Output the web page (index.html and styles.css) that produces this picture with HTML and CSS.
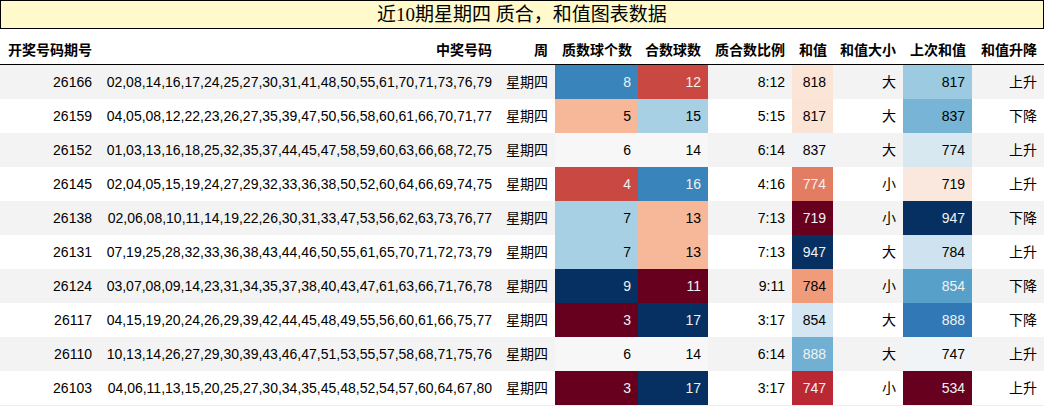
FILE: index.html
```html
<!DOCTYPE html>
<html lang="zh">
<head>
<meta charset="utf-8">
<title>近10期星期四 质合，和值图表数据</title>
<link rel="stylesheet" href="styles.css">
</head>
<body>
<div class="sheet">
  <div class="title">近10期星期四 质合，和值图表数据</div>
  <table class="data">
    <thead>
      <tr>
        <th class="c-id">开奖号码期号</th>
        <th class="c-nums">中奖号码</th>
        <th class="c-week">周</th>
        <th class="c-prime">质数球个数</th>
        <th class="c-comp">合数球数</th>
        <th class="c-ratio">质合数比例</th>
        <th class="c-sum">和值</th>
        <th class="c-size">和值大小</th>
        <th class="c-prev">上次和值</th>
        <th class="c-trend">和值升降</th>
      </tr>
    </thead>
    <tbody>
      <tr>
        <td>26166</td><td>02,08,14,16,17,24,25,27,30,31,41,48,50,55,61,70,71,73,76,79</td><td>星期四</td>
        <td style="background:#3884bb;color:#f1f1f1">8</td>
        <td style="background:#ca4842;color:#f1f1f1">12</td>
        <td>8:12</td>
        <td style="background:#fbe5d7;color:#000">818</td>
        <td>大</td>
        <td style="background:#9bcae1;color:#000">817</td>
        <td>上升</td>
      </tr>
      <tr>
        <td>26159</td><td>04,05,08,12,22,23,26,27,35,39,47,50,56,58,60,61,66,70,71,77</td><td>星期四</td>
        <td style="background:#f7b799;color:#000">5</td>
        <td style="background:#a7d0e4;color:#000">15</td>
        <td>5:15</td>
        <td style="background:#fbe3d5;color:#000">817</td>
        <td>大</td>
        <td style="background:#77b4d5;color:#000">837</td>
        <td>下降</td>
      </tr>
      <tr>
        <td>26152</td><td>01,03,13,16,18,25,32,35,37,44,45,47,58,59,60,63,66,68,72,75</td><td>星期四</td>
        <td style="background:#f7f7f7;color:#000">6</td>
        <td style="background:#f7f7f7;color:#000">14</td>
        <td>6:14</td>
        <td style="background:#f0f4f6;color:#000">837</td>
        <td>大</td>
        <td style="background:#d8e8f1;color:#000">774</td>
        <td>上升</td>
      </tr>
      <tr>
        <td>26145</td><td>02,04,05,15,19,24,27,29,32,33,36,38,50,52,60,64,66,69,74,75</td><td>星期四</td>
        <td style="background:#ca4842;color:#f1f1f1">4</td>
        <td style="background:#3884bb;color:#f1f1f1">16</td>
        <td>4:16</td>
        <td style="background:#e27c63;color:#f1f1f1">774</td>
        <td>小</td>
        <td style="background:#fae8de;color:#000">719</td>
        <td>上升</td>
      </tr>
      <tr>
        <td>26138</td><td>02,06,08,10,11,14,19,22,26,30,31,33,47,53,56,62,63,73,76,77</td><td>星期四</td>
        <td style="background:#a7d0e4;color:#000">7</td>
        <td style="background:#f7b799;color:#000">13</td>
        <td>7:13</td>
        <td style="background:#67001f;color:#f1f1f1">719</td>
        <td>小</td>
        <td style="background:#053061;color:#f1f1f1">947</td>
        <td>下降</td>
      </tr>
      <tr>
        <td>26131</td><td>07,19,25,28,32,33,36,38,43,44,46,50,55,61,65,70,71,72,73,79</td><td>星期四</td>
        <td style="background:#a7d0e4;color:#000">7</td>
        <td style="background:#f7b799;color:#000">13</td>
        <td>7:13</td>
        <td style="background:#053061;color:#f1f1f1">947</td>
        <td>大</td>
        <td style="background:#cee3ef;color:#000">784</td>
        <td>上升</td>
      </tr>
      <tr>
        <td>26124</td><td>03,07,08,09,14,23,31,34,35,37,38,40,43,47,61,63,66,71,76,78</td><td>星期四</td>
        <td style="background:#053061;color:#f1f1f1">9</td>
        <td style="background:#67001f;color:#f1f1f1">11</td>
        <td>9:11</td>
        <td style="background:#f09b7a;color:#000">784</td>
        <td>小</td>
        <td style="background:#57a0ca;color:#f1f1f1">854</td>
        <td>下降</td>
      </tr>
      <tr>
        <td>26117</td><td>04,15,19,20,24,26,29,39,42,44,45,48,49,55,56,60,61,66,75,77</td><td>星期四</td>
        <td style="background:#67001f;color:#f1f1f1">3</td>
        <td style="background:#053061;color:#f1f1f1">17</td>
        <td>3:17</td>
        <td style="background:#d4e6f1;color:#000">854</td>
        <td>大</td>
        <td style="background:#3079b6;color:#f1f1f1">888</td>
        <td>下降</td>
      </tr>
      <tr>
        <td>26110</td><td>10,13,14,26,27,29,30,39,43,46,47,51,53,55,57,58,68,71,75,76</td><td>星期四</td>
        <td style="background:#f7f7f7;color:#000">6</td>
        <td style="background:#f7f7f7;color:#000">14</td>
        <td>6:14</td>
        <td style="background:#72b0d3;color:#f1f1f1">888</td>
        <td>大</td>
        <td style="background:#f1f4f6;color:#000">747</td>
        <td>上升</td>
      </tr>
      <tr>
        <td>26103</td><td>04,06,11,13,15,20,25,27,30,34,35,45,48,52,54,57,60,64,67,80</td><td>星期四</td>
        <td style="background:#67001f;color:#f1f1f1">3</td>
        <td style="background:#053061;color:#f1f1f1">17</td>
        <td>3:17</td>
        <td style="background:#ba2833;color:#f1f1f1">747</td>
        <td>小</td>
        <td style="background:#67001f;color:#f1f1f1">534</td>
        <td>上升</td>
      </tr>
    </tbody>
  </table>
</div>
</body>
</html>
```
FILE: styles.css
```css
* {
  box-sizing: border-box;
}

body {
  margin: 0;
  background: #ffffff;
  color: #000000;
  font-family: "Liberation Sans", "Noto Sans CJK SC", sans-serif;
  font-size: 14px;
}

.sheet {
  width: 1044px;
}

.title {
  height: 29px;
  border: 1px solid #000000;
  background: #fff9cc;
  text-align: center;
  font-family: "Liberation Serif", "Noto Sans CJK SC", serif;
  font-size: 19px;
  line-height: 27px;
}

.data {
  width: 1044px;
  table-layout: fixed;
  border-collapse: separate;
  border-spacing: 0;
  border-bottom: 1px solid #eeeeee;
}

.data th {
  height: 36px;
  padding: 0 7px 4px;
  border-bottom: 1px solid #000000;
  font-weight: bold;
  text-align: right;
  vertical-align: bottom;
  line-height: 20px;
  white-space: nowrap;
}

.data td {
  height: 34px;
  padding: 0 7px;
  text-align: right;
  vertical-align: middle;
  line-height: 20px;
  white-space: nowrap;
}

.data tbody tr:nth-child(odd) td {
  background: #f3f3f3;
}

.c-id { width: 99px; }
.c-nums { width: 400px; }
.c-week { width: 56px; }
.c-prime { width: 83px; }
.c-comp { width: 70px; }
.c-ratio { width: 84px; }
.c-sum { width: 41px; }
.c-size { width: 70px; }
.c-prev { width: 69px; }
.c-trend { width: 72px; }
```
